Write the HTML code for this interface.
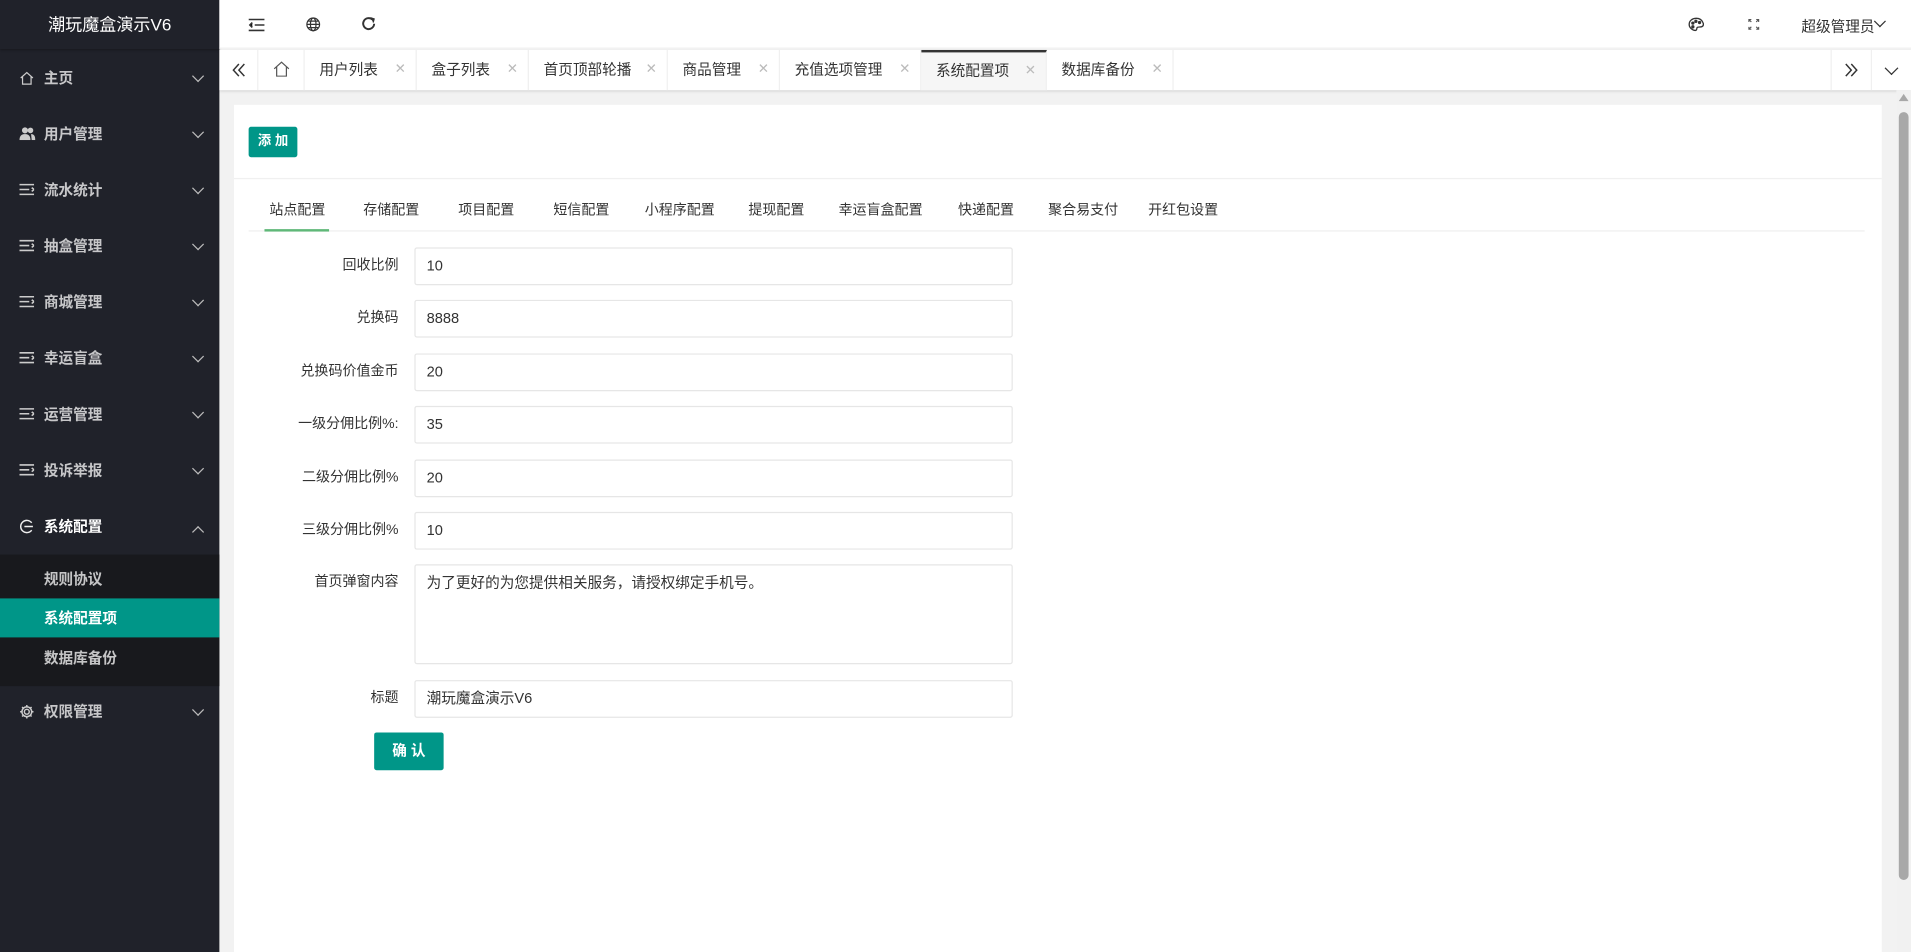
<!DOCTYPE html>
<html><head><meta charset="utf-8"><style>
*{box-sizing:border-box;margin:0;padding:0}
html,body{width:1911px;height:952px;overflow:hidden;background:#f2f2f2}
#w{width:1568px;height:782px;transform:scale(1.21875);transform-origin:0 0;position:relative;font-family:"Liberation Sans","Noto Sans CJK SC",sans-serif;font-size:12px;color:#333}
.abs{position:absolute}
#side{left:0;top:0;width:180px;height:782px;background:#20222a}
.logo{left:0;top:0;width:180px;height:40px;line-height:40px;text-align:center;color:#fff;font-size:14px;box-shadow:0 1px 2px rgba(0,0,0,.3)}
.mi{position:absolute;left:0;width:180px;height:46px;line-height:46px;color:rgba(255,255,255,.75);font-size:12px;padding-left:36px;font-weight:bold}
.mi svg{position:absolute;left:16px;top:17px}
.mi .ar{position:absolute;right:14px;width:7px;height:7px;border-right:1.3px solid #bbb;border-bottom:1.3px solid #bbb;transform:rotate(45deg);top:18px}
.sub{position:absolute;left:0;top:455px;width:180px;height:108px;background:#18191d}
.si{position:absolute;left:0;width:180px;height:32px;line-height:32px;padding-left:36px;color:rgba(255,255,255,.75);font-weight:bold}
#top{left:180px;top:0;width:1388px;height:40px;background:#fff;border-bottom:1px solid #f0f0f0}
#tabs{left:180px;top:41px;width:1388px;height:33px;background:#fff;box-shadow:0 1px 2px rgba(0,0,0,.12)}
.t{position:absolute;top:0;height:33px;line-height:33px;border-right:1px solid #f0f0f0;padding-left:12px;color:#333;font-size:12px}
.t .x{position:absolute;right:8px;color:#bbb;font-size:11px}
#card{left:192px;top:86px;width:1352px;height:700px;background:#fff}
.lbl{position:absolute;right:1241px;width:140px;text-align:right;height:31px;line-height:31px;color:#333;font-size:11.5px}
.inp{position:absolute;left:340px;width:491px;height:31px;border:1px solid #e6e6e6;line-height:29px;padding-left:9px;color:#333;border-radius:2px}
.ct{position:absolute;top:164px;color:#333;font-size:11.5px}
</style></head><body><div id="w">
<div id="side" class="abs">
<div class="logo abs">潮玩魔盒演示V6</div>
<div class="mi" style="top:41px"><svg width="12" height="12" viewBox="0 0 12 12" fill="none" stroke="#ccc" stroke-width="1"><path d="M1 6L6 1.5L11 6M2.5 5v6h7V5"/></svg>主页<i class="ar"></i></div>
<div class="mi" style="top:87px"><svg width="13" height="11" viewBox="0 0 13 11" fill="#ccc"><circle cx="4.5" cy="3" r="2.5"/><circle cx="9" cy="3" r="2.3"/><path d="M0 11c0-4 2-5 4.5-5S9 7 9 11zM9.5 6c2 0 3.5 1 3.5 5h-3z"/></svg>用户管理<i class="ar"></i></div>
<div class="mi" style="top:133px"><svg width="12" height="11" viewBox="0 0 12 11" stroke="#ccc" stroke-width="1.3"><path d="M0 1.5h12M0 5.5h8M0 9.5h12M10 4l2 1.5-2 1.5"/></svg>流水统计<i class="ar"></i></div>
<div class="mi" style="top:179px"><svg width="12" height="11" viewBox="0 0 12 11" stroke="#ccc" stroke-width="1.3"><path d="M0 1.5h12M0 5.5h8M0 9.5h12M10 4l2 1.5-2 1.5"/></svg>抽盒管理<i class="ar"></i></div>
<div class="mi" style="top:225px"><svg width="12" height="11" viewBox="0 0 12 11" stroke="#ccc" stroke-width="1.3"><path d="M0 1.5h12M0 5.5h8M0 9.5h12M10 4l2 1.5-2 1.5"/></svg>商城管理<i class="ar"></i></div>
<div class="mi" style="top:271px"><svg width="12" height="11" viewBox="0 0 12 11" stroke="#ccc" stroke-width="1.3"><path d="M0 1.5h12M0 5.5h8M0 9.5h12M10 4l2 1.5-2 1.5"/></svg>幸运盲盒<i class="ar"></i></div>
<div class="mi" style="top:317px"><svg width="12" height="11" viewBox="0 0 12 11" stroke="#ccc" stroke-width="1.3"><path d="M0 1.5h12M0 5.5h8M0 9.5h12M10 4l2 1.5-2 1.5"/></svg>运营管理<i class="ar"></i></div>
<div class="mi" style="top:363px"><svg width="12" height="11" viewBox="0 0 12 11" stroke="#ccc" stroke-width="1.3"><path d="M0 1.5h12M0 5.5h8M0 9.5h12M10 4l2 1.5-2 1.5"/></svg>投诉举报<i class="ar"></i></div>
<div class="mi" style="top:409px;color:#fff"><svg width="12" height="12" viewBox="0 0 12 12" fill="none" stroke="#eee" stroke-width="1.2"><path d="M10 3A5 5 0 1 0 10 9M4 6h7"/></svg>系统配置<i class="ar" style="transform:rotate(225deg);top:24px"></i></div>
<div class="sub">
<div class="si" style="top:4px">规则协议</div>
<div class="si" style="top:36px;background:#009688;color:#fff">系统配置项</div>
<div class="si" style="top:69px">数据库备份</div>
</div>
<div class="mi" style="top:561px"><svg width="12" height="12" viewBox="0 0 12 12" fill="none" stroke="#ccc" stroke-width="1.2"><circle cx="6" cy="6" r="2"/><path d="M6 .5v2M6 9.5v2M.5 6h2M9.5 6h2M2.1 2.1l1.4 1.4M8.5 8.5l1.4 1.4M2.1 9.9l1.4-1.4M8.5 3.5l1.4-1.4"/><circle cx="6" cy="6" r="4"/></svg>权限管理<i class="ar"></i></div>
</div>
<div id="top" class="abs">
<svg class="abs" style="left:24px;top:15px" width="13" height="11" viewBox="0 0 13 11" stroke="#333" stroke-width="1.3"><path d="M0 1h13M5 5.5h8M0 10h13M3 3.5L1 5.5l2 2"/></svg>
<svg class="abs" style="left:71px;top:14px" width="12" height="12" viewBox="0 0 12 12" fill="none" stroke="#333" stroke-width="1"><circle cx="6" cy="6" r="5.2"/><ellipse cx="6" cy="6" rx="2.3" ry="5.2"/><path d="M1 6h10M2 3.3h8M2 8.7h8"/></svg>
<svg class="abs" style="left:116px;top:13px" width="13" height="13" viewBox="0 0 13 13" fill="none" stroke="#333" stroke-width="1.6"><path d="M11 6.5A4.5 4.5 0 1 1 9.5 3"/><path d="M8 1.5L11 2.5 10.2 5.5" fill="#333" stroke-width="1"/></svg>
<svg class="abs" style="left:1205px;top:14px" width="14" height="12" viewBox="0 0 14 12" fill="none" stroke="#333" stroke-width="1.1"><path d="M7 1C3 1 1 3.5 1 6c0 3 3 5 5 5 1.5 0 1-1.5 1.5-2.3.6-.9 2.3-.3 3.5-.7C13 7.5 13 5.5 12 4 11 2 9 1 7 1z"/><circle cx="4" cy="5" r=".8" fill="#333"/><circle cx="6.5" cy="3.5" r=".8" fill="#333"/><circle cx="9.5" cy="4.5" r=".8" fill="#333"/><circle cx="4" cy="8" r=".8" fill="#333"/></svg>
<svg class="abs" style="left:1254px;top:15px" width="10" height="10" viewBox="0 0 10 10" fill="none" stroke="#555" stroke-width="0.9"><path d="M1 3V1h2M1 1l2 2M9 3V1H7M9 1L7 3M1 7v2h2M1 9l2-2M9 7v2H7M9 9L7 7"/></svg>
<span class="abs" style="left:1298px;top:13px;font-size:12px">超级管理员</span>
<i class="abs" style="left:1359px;top:14px;width:7px;height:7px;border-right:1.2px solid #333;border-bottom:1.2px solid #333;transform:rotate(45deg)"></i>
</div>
<div id="tabs" class="abs">
<div class="t" style="left:0;width:32px"><svg class="abs" style="left:10px;top:11px" width="12" height="11" viewBox="0 0 12 11" fill="none" stroke="#333" stroke-width="1.2"><path d="M6 .5L1.5 5.5 6 10.5M10.5 .5L6 5.5l4.5 5"/></svg></div>
<div class="t" style="left:32px;width:38px"><svg class="abs" style="left:12px;top:9px" width="14" height="13" viewBox="0 0 14 13" fill="none" stroke="#555" stroke-width="1"><path d="M1 6.5L7 1l6 5.5M3 5v7.5h8V5"/></svg></div>
<div class="t" style="left:70px;width:92px">用户列表<span class="x">✕</span></div>
<div class="t" style="left:162px;width:92px">盒子列表<span class="x">✕</span></div>
<div class="t" style="left:254px;width:114px">首页顶部轮播<span class="x">✕</span></div>
<div class="t" style="left:368px;width:92px">商品管理<span class="x">✕</span></div>
<div class="t" style="left:460px;width:116px">充值选项管理<span class="x">✕</span></div>
<div class="t" style="left:576px;width:103px;background:#f6f6f6;border-top:2px solid #333;line-height:31px">系统配置项<span class="x">✕</span></div>
<div class="t" style="left:679px;width:104px">数据库备份<span class="x">✕</span></div>
<div class="t" style="left:1322px;width:34px;border-left:1px solid #f0f0f0"><svg class="abs" style="left:10px;top:11px" width="12" height="11" viewBox="0 0 12 11" fill="none" stroke="#333" stroke-width="1.2"><path d="M1.5 .5L6 5.5 1.5 10.5M6 .5l4.5 5-4.5 5"/></svg></div>
<i class="abs" style="left:1368px;top:11px;width:8px;height:8px;border-right:1.2px solid #333;border-bottom:1.2px solid #333;transform:rotate(45deg)"></i>
</div>
<div class="abs" style="left:1556px;top:74px;width:12px;height:708px;background:#f1f1f1"><div class="abs" style="left:2px;top:3px;width:0;height:0;border-left:4px solid transparent;border-right:4px solid transparent;border-bottom:6px solid #a8a8a8"></div><div class="abs" style="left:2px;top:18px;width:8px;height:630px;background:#a8a8a8;border-radius:4px"></div></div>
<div id="card" class="abs"></div>
<div class="abs" style="left:204px;top:104px;width:40px;height:25px;background:#009688;color:#fff;line-height:25px;text-align:center;font-size:11px;font-weight:bold;border-radius:2px">添 加</div>
<div class="abs" style="left:192px;top:146px;width:1352px;height:1px;background:#f0f0f0"></div>
<div class="abs" style="left:204px;top:189px;width:1326px;height:1px;background:#eee"></div>
<div class="abs" style="left:217px;top:188px;width:53px;height:2px;background:#5fb878"></div>
<span class="ct" style="left:221px">站点配置</span>
<span class="ct" style="left:298px">存储配置</span>
<span class="ct" style="left:376px">项目配置</span>
<span class="ct" style="left:454px">短信配置</span>
<span class="ct" style="left:529px">小程序配置</span>
<span class="ct" style="left:614px">提现配置</span>
<span class="ct" style="left:688px">幸运盲盒配置</span>
<span class="ct" style="left:786px">快递配置</span>
<span class="ct" style="left:860px">聚合易支付</span>
<span class="ct" style="left:942px">开红包设置</span>
<div class="lbl" style="top:203px">回收比例</div><div class="inp" style="top:203px">10</div>
<div class="lbl" style="top:246px">兑换码</div><div class="inp" style="top:246px">8888</div>
<div class="lbl" style="top:290px">兑换码价值金币</div><div class="inp" style="top:290px">20</div>
<div class="lbl" style="top:333px">一级分佣比例%:</div><div class="inp" style="top:333px">35</div>
<div class="lbl" style="top:377px">二级分佣比例%</div><div class="inp" style="top:377px">20</div>
<div class="lbl" style="top:420px">三级分佣比例%</div><div class="inp" style="top:420px">10</div>
<div class="lbl" style="top:463px">首页弹窗内容</div><div class="inp" style="top:463px;height:82px;line-height:29px">为了更好的为您提供相关服务，请授权绑定手机号。</div>
<div class="lbl" style="top:558px">标题</div><div class="inp" style="top:558px">潮玩魔盒演示V6</div>
<div class="abs" style="left:307px;top:601px;width:57px;height:31px;background:#009688;color:#fff;line-height:31px;text-align:center;font-weight:bold;border-radius:2px">确 认</div>
</div></body></html>
